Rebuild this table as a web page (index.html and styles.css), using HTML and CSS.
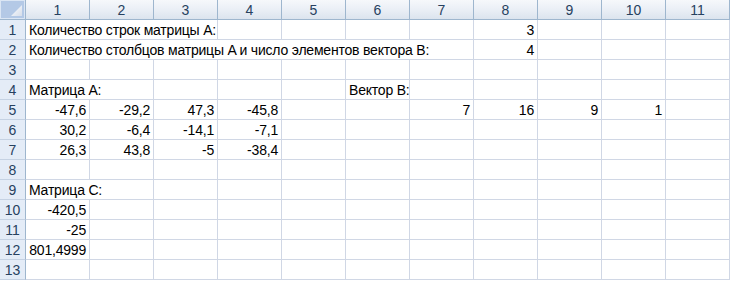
FILE: index.html
```html
<!DOCTYPE html>
<html lang="ru">
<head>
<meta charset="utf-8">
<title>Матрицы</title>
<link rel="stylesheet" href="styles.css">
</head>
<body>
<div class="sheet">
  <div class="corner"><svg class="tri" width="12" height="12" viewBox="0 0 12 12"><defs><linearGradient id="g" x1="0" y1="0" x2="1" y2="1"><stop offset="0" stop-color="#ffffff"/><stop offset="1" stop-color="#d6deea"/></linearGradient></defs><polygon points="11,0 11,11 0,11" fill="url(#g)"/></svg></div>
  <div class="ch">1</div><div class="ch">2</div><div class="ch">3</div><div class="ch">4</div><div class="ch">5</div><div class="ch">6</div><div class="ch">7</div><div class="ch">8</div><div class="ch">9</div><div class="ch">10</div><div class="ch">11</div>

  <div class="rh">1</div>
  <div class="c t s3">Количество строк матрицы A:</div><div class="c"></div><div class="c"></div><div class="c"></div><div class="c"></div><div class="c n">3</div><div class="c"></div><div class="c"></div><div class="c"></div>

  <div class="rh">2</div>
  <div class="c t s7">Количество столбцов матрицы A и число элементов вектора B:</div><div class="c n">4</div><div class="c"></div><div class="c"></div><div class="c"></div>

  <div class="rh">3</div>
  <div class="c"></div><div class="c"></div><div class="c"></div><div class="c"></div><div class="c"></div><div class="c"></div><div class="c"></div><div class="c"></div><div class="c"></div><div class="c"></div><div class="c"></div>

  <div class="rh">4</div>
  <div class="c t s2">Матрица A:</div><div class="c"></div><div class="c"></div><div class="c"></div><div class="c t">Вектор B:</div><div class="c"></div><div class="c"></div><div class="c"></div><div class="c"></div><div class="c"></div>

  <div class="rh">5</div>
  <div class="c n">-47,6</div><div class="c n">-29,2</div><div class="c n">47,3</div><div class="c n">-45,8</div><div class="c"></div><div class="c"></div><div class="c n">7</div><div class="c n">16</div><div class="c n">9</div><div class="c n">1</div><div class="c"></div>

  <div class="rh">6</div>
  <div class="c n">30,2</div><div class="c n">-6,4</div><div class="c n">-14,1</div><div class="c n">-7,1</div><div class="c"></div><div class="c"></div><div class="c"></div><div class="c"></div><div class="c"></div><div class="c"></div><div class="c"></div>

  <div class="rh">7</div>
  <div class="c n">26,3</div><div class="c n">43,8</div><div class="c n">-5</div><div class="c n">-38,4</div><div class="c"></div><div class="c"></div><div class="c"></div><div class="c"></div><div class="c"></div><div class="c"></div><div class="c"></div>

  <div class="rh">8</div>
  <div class="c"></div><div class="c"></div><div class="c"></div><div class="c"></div><div class="c"></div><div class="c"></div><div class="c"></div><div class="c"></div><div class="c"></div><div class="c"></div><div class="c"></div>

  <div class="rh">9</div>
  <div class="c t s2">Матрица C:</div><div class="c"></div><div class="c"></div><div class="c"></div><div class="c"></div><div class="c"></div><div class="c"></div><div class="c"></div><div class="c"></div><div class="c"></div>

  <div class="rh">10</div>
  <div class="c n">-420,5</div><div class="c"></div><div class="c"></div><div class="c"></div><div class="c"></div><div class="c"></div><div class="c"></div><div class="c"></div><div class="c"></div><div class="c"></div><div class="c"></div>

  <div class="rh">11</div>
  <div class="c n">-25</div><div class="c"></div><div class="c"></div><div class="c"></div><div class="c"></div><div class="c"></div><div class="c"></div><div class="c"></div><div class="c"></div><div class="c"></div><div class="c"></div>

  <div class="rh">12</div>
  <div class="c n">801,4999</div><div class="c"></div><div class="c"></div><div class="c"></div><div class="c"></div><div class="c"></div><div class="c"></div><div class="c"></div><div class="c"></div><div class="c"></div><div class="c"></div>

  <div class="rh">13</div>
  <div class="c"></div><div class="c"></div><div class="c"></div><div class="c"></div><div class="c"></div><div class="c"></div><div class="c"></div><div class="c"></div><div class="c"></div><div class="c"></div><div class="c"></div>
</div>
</body>
</html>
```
FILE: styles.css
```css
html, body {
  margin: 0;
  padding: 0;
  background: #ffffff;
  overflow: hidden;
}
.sheet {
  display: grid;
  grid-template-columns: 26px repeat(11, 64px);
  grid-template-rows: 20px;
  grid-auto-rows: 20px;
  font-family: "Liberation Sans", Arial, sans-serif;
  font-size: 14px;
  letter-spacing: -0.2px;
  color: #000000;
  width: 730px;
}
.corner {
  box-sizing: border-box;
  background: #b4c9e6;
  border-right: 1px solid #9eb6ce;
  border-bottom: 1px solid #9eb6ce;
  box-shadow: inset 1px 1px 0 #dbe6f4, inset -1px -1px 0 #dbe6f4;
  position: relative;
}
.tri {
  position: absolute;
  right: 2px;
  bottom: 2px;
}
.ch {
  box-sizing: border-box;
  background: linear-gradient(#f6f8fb, #e9eef5 55%, #dce4ee);
  border-right: 1px solid #9eb6ce;
  border-bottom: 1px solid #9eb6ce;
  text-align: center;
  line-height: 19px;
  padding-top: 1px;
  color: #27415f;
  letter-spacing: 0;
}
.rh {
  box-sizing: border-box;
  background: #e4ecf7;
  border-right: 1px solid #9eb6ce;
  border-bottom: 1px solid #c5d2e3;
  text-align: center;
  line-height: 19px;
  padding-top: 1px;
  color: #27415f;
  letter-spacing: 0;
}
.c {
  box-sizing: border-box;
  border-right: 1px solid #d0d7e5;
  border-bottom: 1px solid #d0d7e5;
  line-height: 19px;
  padding-top: 1px;
  white-space: nowrap;
}
.t {
  text-align: left;
  padding-left: 3px;
}
.n {
  text-align: right;
  padding-right: 3px;
}
.s2 { grid-column: span 2; }
.s3 { grid-column: span 3; }
.s7 { grid-column: span 7; }
```
